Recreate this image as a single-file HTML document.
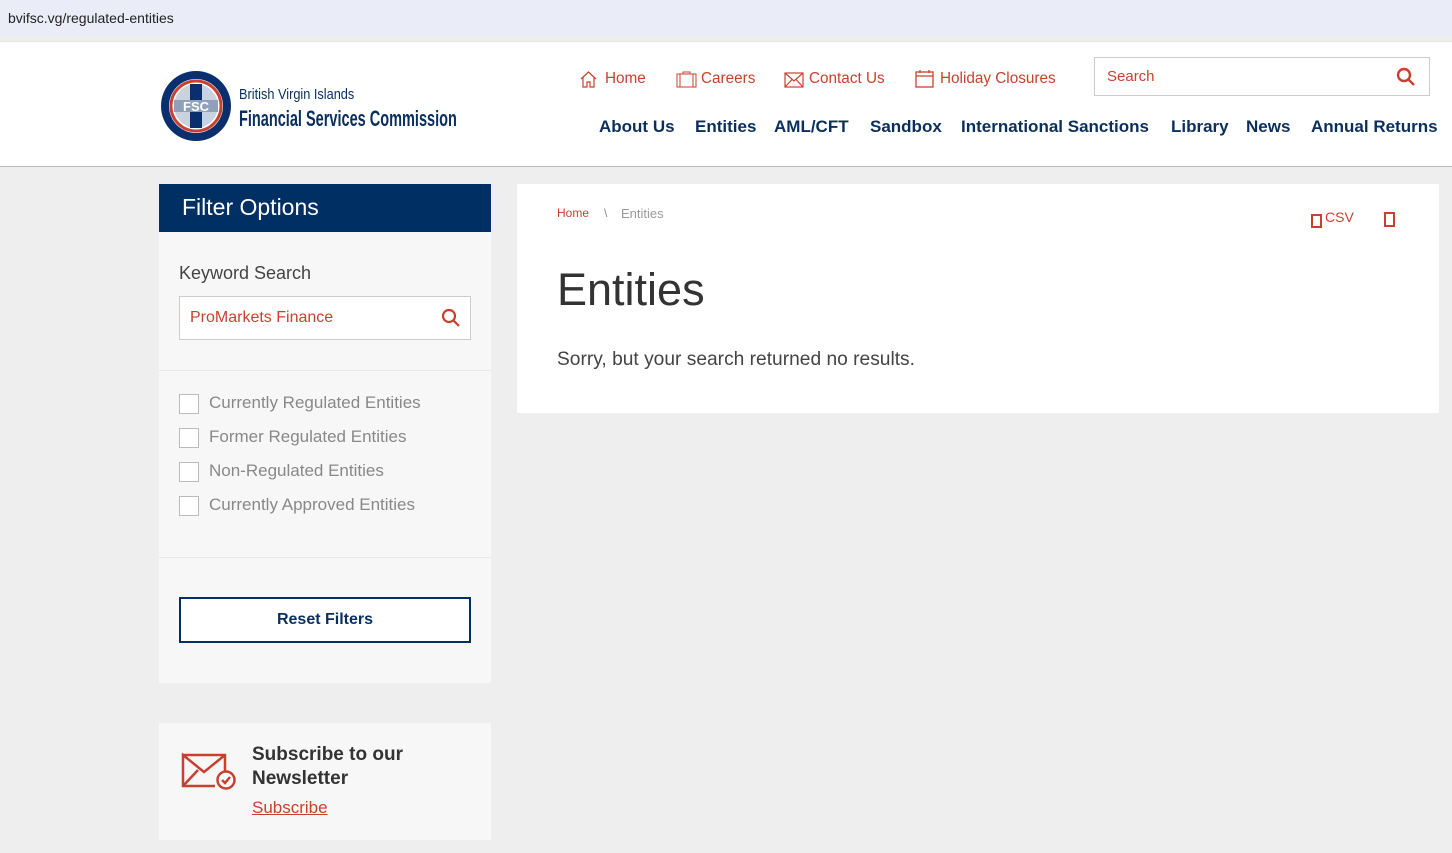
<!DOCTYPE html>
<html><head><meta charset="utf-8"><style>
*{box-sizing:border-box;margin:0;padding:0}
body{width:1452px;height:853px;overflow:hidden;background:#eeeeee;font-family:"Liberation Sans",sans-serif;position:relative}
.url{position:absolute;left:0;top:0;width:1452px;height:36px;background:#eaedf7;font-size:14px;color:#222;padding:10px 8px}
.hdr{position:absolute;left:0;top:41px;width:1452px;height:126px;background:#fff;border-bottom:1px solid #bbb;border-top:1px solid #e5e5e5}
.a{position:absolute;white-space:nowrap}
.top{color:#c8412f;font-size:15.3px;top:28px}
.nav{color:#0a2f5e;font-size:17px;font-weight:bold;top:75px}
.card{position:absolute;background:#f7f7f7}
.cb{position:absolute;left:20px;width:20px;height:20px;border:1px solid #bbb;background:#fff}
.cl{position:absolute;left:50px;font-size:17px;color:#888}
</style></head><body>
<div class="url">bvifsc.vg/regulated-entities</div>
<div class="hdr">
 <svg class="a" style="left:160px;top:28px" width="72" height="72" viewBox="0 0 72 72">
  <circle cx="36" cy="36" r="35" fill="#0a2f6e"/><circle cx="36" cy="36" r="27" fill="#fff"/><circle cx="36" cy="36" r="25" fill="none" stroke="#c8412f" stroke-width="3"/><circle cx="36" cy="36" r="22" fill="#c9d3e0"/>
  <rect x="30" y="14" width="12" height="44" fill="#0a2f6e"/><rect x="14" y="30" width="44" height="12" fill="#8fa0b8"/>
  <text x="36" y="41" font-size="13" fill="#fff" text-anchor="middle" font-weight="bold" font-family="Liberation Sans">FSC</text></svg>
 <div class="a" style="left:239px;top:44px;color:#0a2f5e;font-size:15px;font-family:'Liberation Sans Narrow','Liberation Sans',sans-serif;transform:scaleX(.85);transform-origin:left">British Virgin Islands</div>
 <div class="a" style="left:239px;top:64px;color:#0a2f5e;font-size:22px;font-weight:bold;font-family:'Liberation Sans Narrow','Liberation Sans',sans-serif;transform:scaleX(.66);transform-origin:left">Financial Services Commission</div>
 <svg class="a" style="left:580px;top:28px" width="17" height="18" viewBox="0 0 17 18" fill="none" stroke="#c8412f" stroke-width="1.2"><path d="M1 9L8.5 2L16 9M3 7.5V17H7V12H10V17H14V7.5"/></svg>
 <div class="a top" style="left:605px">Home</div>
 <svg class="a" style="left:676px;top:29px" width="21" height="17" viewBox="0 0 21 17" fill="none" stroke="#c8412f" stroke-width="1"><rect x="1" y="3" width="19" height="13"/><path d="M7 3V1H14V3M4 3V16M17 3V16"/></svg>
 <div class="a top" style="left:701px">Careers</div>
 <svg class="a" style="left:784px;top:30px" width="20" height="16" viewBox="0 0 20 16" fill="none" stroke="#c8412f" stroke-width="1.2"><rect x="1" y="1" width="18" height="14"/><path d="M1 1L10 9L19 1M1 15L8 7.5M19 15L12 7.5"/></svg>
 <div class="a top" style="left:809px">Contact Us</div>
 <svg class="a" style="left:915px;top:27px" width="19" height="19" viewBox="0 0 19 19" fill="none" stroke="#c8412f" stroke-width="1.3"><rect x="1" y="3" width="17" height="15"/><path d="M1 7H18M5 1V4M14 1V4"/></svg>
 <div class="a top" style="left:940px">Holiday Closures</div>
 <div class="a" style="left:1094px;top:15px;width:336px;height:39px;border:1px solid #ccc"></div>
 <div class="a" style="left:1107px;top:26px;color:#c8412f;font-size:15px">Search</div>
 <svg class="a" style="left:1396px;top:25px" width="20" height="20" viewBox="0 0 20 20" fill="none" stroke="#c8412f" stroke-width="2.4"><circle cx="8" cy="8" r="6"/><path d="M12.5 12.5L18 18"/></svg>
 <div class="a nav" style="left:599px">About Us</div>
 <div class="a nav" style="left:695px">Entities</div>
 <div class="a nav" style="left:774px">AML/CFT</div>
 <div class="a nav" style="left:870px">Sandbox</div>
 <div class="a nav" style="left:961px">International Sanctions</div>
 <div class="a nav" style="left:1171px">Library</div>
 <div class="a nav" style="left:1246px">News</div>
 <div class="a nav" style="left:1311px">Annual Returns</div>
</div>

<div class="card" style="left:159px;top:184px;width:332px;height:499px">
 <div style="height:48px;background:#002f63;color:#fff;font-size:23px;padding:10px 23px">Filter Options</div>
 <div class="a" style="left:20px;top:79px;font-size:18px;color:#444">Keyword Search</div>
 <div class="a" style="left:20px;top:112px;width:292px;height:44px;border:1px solid #ccc;background:#fff"></div>
 <div class="a" style="left:31px;top:125px;font-size:16px;color:#c8412f">ProMarkets Finance</div>
 <svg class="a" style="left:282px;top:124px" width="20" height="20" viewBox="0 0 20 20" fill="none" stroke="#c8412f" stroke-width="2.2"><circle cx="8" cy="8" r="6"/><path d="M12.5 12.5L18 18"/></svg>
 <div class="a" style="left:0;top:186px;width:332px;height:1px;background:#e8e8e8"></div>
 <div class="cb" style="top:210px"></div><div class="cl" style="top:209px">Currently Regulated Entities</div>
 <div class="cb" style="top:244px"></div><div class="cl" style="top:243px">Former Regulated Entities</div>
 <div class="cb" style="top:278px"></div><div class="cl" style="top:277px">Non-Regulated Entities</div>
 <div class="cb" style="top:312px"></div><div class="cl" style="top:311px">Currently Approved Entities</div>
 <div class="a" style="left:0;top:373px;width:332px;height:1px;background:#e8e8e8"></div>
 <div class="a" style="left:20px;top:413px;width:292px;height:46px;border:2px solid #002f63;background:#fff;text-align:center;line-height:42px;font-size:16px;font-weight:bold;color:#0a2f5e">Reset Filters</div>
</div>

<div class="card" style="left:159px;top:723px;width:332px;height:117px">
 <svg class="a" style="left:22px;top:30px" width="56" height="38" viewBox="0 0 56 38" fill="none" stroke="#c8412f" stroke-width="2.5"><path d="M2 2H44V21M34 33H2V2L23 19L44 2M2 33L17 17"/><circle cx="45" cy="27" r="8.5" fill="#fff"/><path d="M41 27L44 30L49 24"/></svg>
 <div class="a" style="left:93px;top:20px;font-size:19px;font-weight:bold;color:#333;line-height:24px">Subscribe to our<br>Newsletter</div>
 <div class="a" style="left:93px;top:75px;font-size:17px;color:#c8412f;text-decoration:underline">Subscribe</div>
</div>

<div class="a" style="left:517px;top:184px;width:922px;height:229px;background:#fff">
 <div class="a" style="left:40px;top:22px;font-size:12px;color:#c8412f">Home</div>
 <div class="a" style="left:87px;top:22px;font-size:12px;color:#888">\</div>
 <div class="a" style="left:104px;top:22px;font-size:13px;color:#999">Entities</div>
 <div class="a" style="left:794px;top:30px;width:11px;height:14px;border:2px solid #c8412f"></div>
 <div class="a" style="left:808px;top:25px;font-size:14px;color:#c8412f">CSV</div>
 <div class="a" style="left:867px;top:28px;width:11px;height:15px;border:2px solid #c8412f"></div>
 <div class="a" style="left:40px;top:80px;font-size:45px;color:#333">Entities</div>
 <div class="a" style="left:40px;top:165px;font-size:19.2px;color:#444">Sorry, but your search returned no results.</div>
</div>
</body></html>
